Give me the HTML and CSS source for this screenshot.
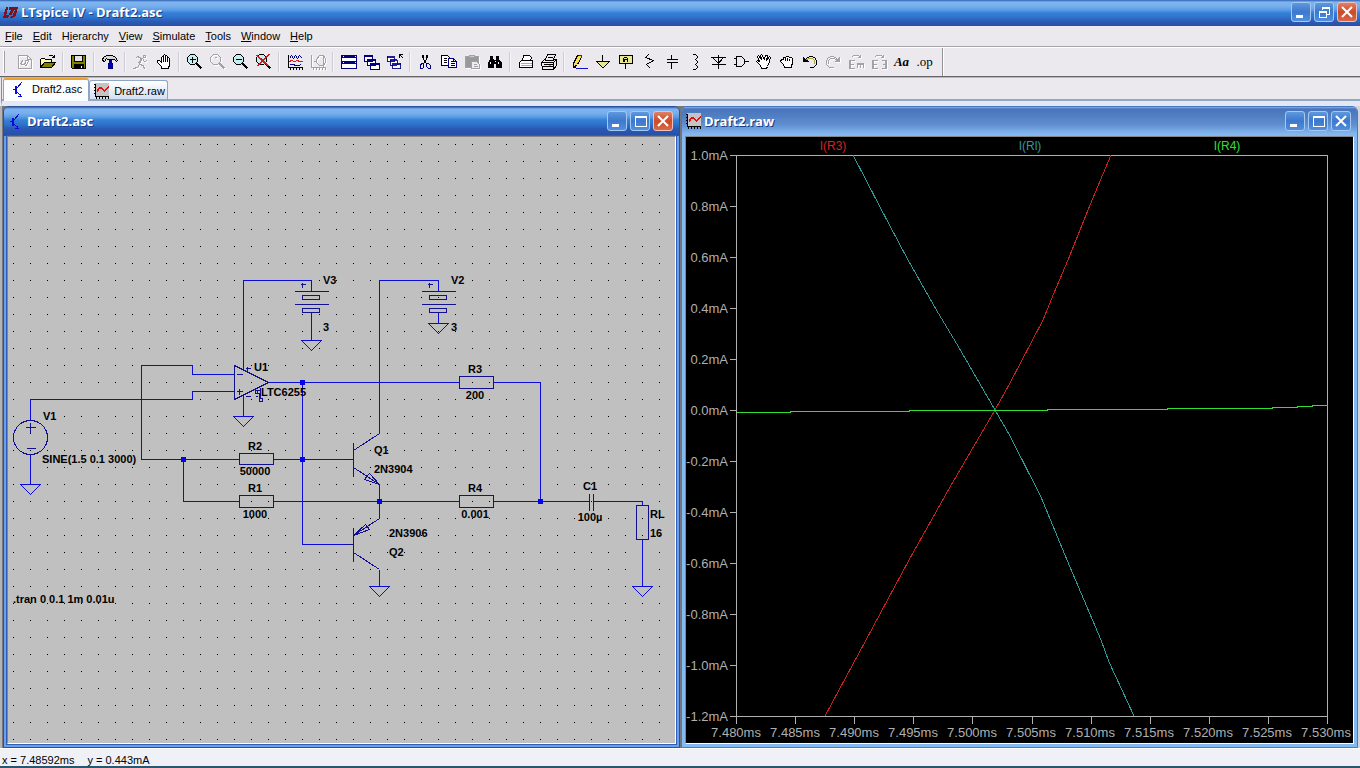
FILE: index.html
```html
<!DOCTYPE html>
<html lang="en">
<head>
    <meta charset="UTF-8">
    <meta name="viewport" content="width=device-width, initial-scale=1.0">
    <title>LTspice IV - Draft2.asc</title>
    <link rel="stylesheet" href="styles.css">
</head>
<body>

    <!-- shared symbols -->
    <svg class="defs" width="0" height="0">
        <symbol id="lens" viewBox="-.5 -.5 16 16">
            <path d="M9 9l5 5M10 9l5 5M9 10l5 5" stroke="#000" fill="none"/>
            <path d="M3 0h4l3 3v4l-3 3h-4l-3-3v-4z" fill="#c4eef0" stroke="#000"/>
        </symbol>
        <symbol id="transistor" viewBox="-.5 -.5 16 16">
            <path d="M1 8h4M4 4v8M5 4v8M5 6h1l4-5M5 10l5 5M9 12v3h-3M10 14v1" fill="none" stroke="#0a0ad8"/>
        </symbol>
        <symbol id="wave" viewBox="-.5 -.5 16 16">
            <path d="M2 0h13v12h-13z" fill="#c4c4c4" stroke="#c4c4c4"/>
            <path d="M2 0v13h14M0 1h2M0 4h2M0 7h2M0 10h2M3 13v2M6 13v2M9 13v2M12 13v2M15 13v2" fill="none" stroke="#000"/>
            <path d="M3 8l3-4h2l3 3 4-4M3 9l3-4h2l3 3 4-4" fill="none" stroke="#e01010"/>
        </symbol>
        <symbol id="cascade" viewBox="-.5 -.5 16 16">
            <path d="M0 1h8v6h-8zM3 5h8v6h-8zM6 9h9v6h-9z" fill="#fff" stroke="#000080"/>
            <path d="M0 2h8M3 6h8M6 10h9" stroke="#000080"/>
        </symbol>
    </svg>

    <header class="titlebar app-title">
        <svg class="logo" width="16" height="16" viewBox="-.5 -.5 16 16"><path d="M4 3h1L3 11h3l-1 2H1zM7 3h8l-2 7q-1 3-5 3l1-1q2 0 2-2l2-5h-2l-2 5H7l2-5H7z" fill="#801018" stroke="#801018"/></svg>
        <h1>LTspice IV - Draft2.asc</h1>
        <div class="controls">
            <button type="button" aria-label="Minimize"><svg width="18" height="18"><path d="M4 12h7v3h-7z" fill="#fff"/></svg></button>
            <button type="button" aria-label="Restore"><svg width="18" height="18"><path d="M7 7V4h7v7h-3M7 5h7" fill="none" stroke="#fff"/><path d="M4 8h7v6h-7zM4 9h7" fill="none" stroke="#fff"/></svg></button>
            <button type="button" class="close" aria-label="Close"><svg width="18" height="18"><path d="M4 4l10 10M14 4L4 14" stroke="#fff" stroke-width="2"/></svg></button>
        </div>
    </header>

    <nav class="menubar">
        <button type="button"><u>F</u>ile</button>
        <button type="button"><u>E</u>dit</button>
        <button type="button">H<u>i</u>erarchy</button>
        <button type="button"><u>V</u>iew</button>
        <button type="button"><u>S</u>imulate</button>
        <button type="button"><u>T</u>ools</button>
        <button type="button"><u>W</u>indow</button>
        <button type="button"><u>H</u>elp</button>
    </nav>

    <div class="toolbar-row">
        <div class="toolbar">
            <span class="grip"></span>
            <button type="button" disabled aria-label="New Schematic"><svg viewBox="-.5 -.5 16 16"><path d="M1 1h9l4 4v9h-13zM10 1v4h4M3 10h3M3 10l2-4M7 6h4l-2 5h-2M8 7l-1 4"/></svg></button>
            <button type="button" aria-label="Open"><svg viewBox="-.5 -.5 16 16"><path d="M0 13V5l1-1h3l1 1h6v3h-7z" fill="#ffff9c" stroke="#000"/><path d="M0 13l4-5h11l-4 5z" fill="#808000" stroke="#000"/><path d="M8 2l1-1h3l2 2M14 0v3h-3"/></svg></button>
            <i></i>
            <button type="button" aria-label="Save"><svg viewBox="-.5 -.5 16 16"><path d="M0 1h14v13h-13l-1-1z" fill="#808000" stroke="#000"/><path d="M3 1h8v6h-8z" fill="#e4e4e4" stroke="#000"/><path d="M3 10h9v4h-9z" fill="#000" stroke="#000"/><path d="M10 11v2" stroke="#fff"/></svg></button>
            <i></i>
            <button type="button" aria-label="Control Panel"><svg viewBox="-.5 -.5 16 16"><path d="M0 5l1-2 3-2h6l3 2 2 3-1 1-2-2H5L4 4 2 7 0 6z" fill="#d8d8d8" stroke="#000"/><path d="M7 6h2v3h1v5H6V9h1z" fill="#0000c0" stroke="#000080"/></svg></button>
            <i></i>
            <button type="button" disabled aria-label="Run"><svg viewBox="-.5 -.5 16 16"><path d="M10 1h2v2h-2zM2 4l2-2 4 2-3 5M9 4l2 3 3-1M8 5l-2 5 4 1 1 4M6 10l-2 3-4 1M8 4l-2 4" /></svg></button>
            <button type="button" aria-label="Halt"><svg viewBox="-.5 -.5 16 16"><path d="M5 14v-2l-4-4V6h2l2 2V3l1-1 1 1V1l1-1 1 1v1l1-1 1 1v2l1-1 1 1v7l-1 2v1z" fill="#fff"/><path d="M7 3v4M9 2v5M11 4v3"/></svg></button>
            <i></i>
            <button type="button" aria-label="Zoom area"><svg viewBox="-.5 -.5 16 16"><use href="#lens" x="-.5" y="-.5" width="16" height="16"/><path d="M2 5h6M5 2v6"/></svg></button>
            <button type="button" disabled aria-label="Pan"><svg viewBox="-.5 -.5 16 16"><path d="M3 0h4l3 3v4l-3 3h-4l-3-3v-4zM9 9l5 5M10 9l5 5M9 10l5 5M4 3h2"/></svg></button>
            <button type="button" aria-label="Zoom back"><svg viewBox="-.5 -.5 16 16"><use href="#lens" x="-.5" y="-.5" width="16" height="16"/><path d="M2 5h6"/></svg></button>
            <button type="button" aria-label="Zoom full extents"><svg viewBox="-.5 -.5 16 16"><use href="#lens" x="-.5" y="-.5" width="16" height="16"/><path d="M0 1l12 11M1 1l12 11M12 0L0 12M13 0L1 12" stroke="#d01818"/></svg></button>
            <i></i>
            <button type="button" aria-label="Autorange"><svg viewBox="-.5 -.5 16 16"><path d="M1 0v13h15M0 1h1M0 4h1M0 7h1M0 10h1M3 13v2M6 13v2M9 13v2M12 13v2M15 13v2"/><path d="M2 4l2-3 2 3 2-3 2 3 2-3 3 3M2 10h4l2 1h3l3-1" stroke="#000090"/><path d="M2 7l2-1 3 1 3-1 2 1h3" stroke="#e01818"/></svg></button>
            <button type="button" disabled aria-label="Pick visible traces"><svg viewBox="-.5 -.5 16 16"><path d="M1 0v13h15M0 1h1M0 4h1M0 7h1M0 10h1M3 13v2M6 13v2M9 13v2M12 13v2M15 13v2M3 7h3M6 5l3-4h4l2 3v4l-2 3H9L6 8zM13 0v12"/></svg></button>
            <i></i>
            <button type="button" aria-label="Tile"><svg viewBox="-.5 -.5 16 16"><path d="M0 1h15v13h-15z" fill="#fff" stroke="#000080"/><path d="M0 2h15M0 3h15M0 7h15M0 8h15M0 9h15" stroke="#000080"/><path d="M1 2h1M13 2h1M1 8h1M13 8h1" stroke="#fff"/></svg></button>
            <button type="button" aria-label="Cascade"><svg viewBox="-.5 -.5 16 16"><use href="#cascade" x="-.5" y="-.5" width="16" height="16"/></svg></button>
            <button type="button" aria-label="Close all"><svg viewBox="-.5 -.5 16 16"><use href="#cascade" x="-.5" y="-.5" width="14" height="16"/><path d="M12 0h3M12 0v3M12 0l4 4"/></svg></button>
            <i></i>
            <button type="button" aria-label="Cut"><svg viewBox="-.5 -.5 16 16"><path d="M4 0v3l4 6M9 0v3L5 9M5 0v3M8 0v3"/><path d="M3 9h2v4l-1 1H2v-3zM8 9h2l2 2v3h-2l-2-2z" stroke="#000080"/></svg></button>
            <button type="button" aria-label="Copy"><svg viewBox="-.5 -.5 16 16"><path d="M0 1h6l2 2v8h-8z" fill="#fff"/><path d="M2 4h3M2 6h3M2 8h3"/><path d="M7 4h5l3 3v6h-8zM12 4v3h3" fill="#fff" stroke="#000080"/><path d="M9 7h2M9 9h4M9 11h4" /></svg></button>
            <button type="button" disabled aria-label="Paste"><svg viewBox="-.5 -.5 16 16"><path d="M1 2h13v11h-13z" fill="#999"/><path d="M5 1h5v2h-5z" fill="#ccc"/><path d="M7 7h5l3 3v4h-8z" fill="#eee"/><path d="M9 10h3M9 12h4"/></svg></button>
            <button type="button" aria-label="Find"><svg viewBox="-.5 -.5 16 16"><path d="M3 2h2v3h1v8H1V8l2-3zM9 2h2v3l3 3v5H9V5zM6 6h3v3H6z" fill="#000"/><path d="M3 7v2M11 7v2M7 7h1" stroke="#fff"/></svg></button>
            <i></i>
            <button type="button" aria-label="Print setup"><svg viewBox="-.5 -.5 16 16"><path d="M4 6l1-5h6l2 2-1 3h2v7H1V8l2-2z" fill="#fff"/><path d="M2 9h11M2 11h11" stroke="#aaa"/><path d="M3 6h9M1 13h13"/></svg></button>
            <button type="button" aria-label="Print"><svg viewBox="-.5 -.5 16 16"><path d="M4 5l2-5h8l-2 5h3v6l-3 4H1L0 8l3-3z" fill="#ececec"/><path d="M6 3h5M3 6h9M0 8h12l3-3M1 12h11M12 8v6M2 10h9"/><path d="M7 11h2" stroke="#b0b000"/></svg></button>
            <i></i>
            <button type="button" aria-label="Wire"><svg viewBox="-.5 -.5 16 16"><path d="M5 1h4v2l-4 7-4 3v-4z" fill="#ffe040"/><path d="M6 1h3v2" stroke="#901010"/><path d="M1 10v3h2M2 11h1v1"/><path d="M3 14h12" stroke="#1010d0"/></svg></button>
            <button type="button" aria-label="Ground"><svg viewBox="-.5 -.5 16 16"><path d="M7 0v7"/><path d="M1 7h13l-6 6h-1z" fill="#e8e890"/></svg></button>
            <button type="button" aria-label="Label net"><svg viewBox="-.5 -.5 16 16"><path d="M1 1h13v8h-13zM7 9v5" fill="#e8e890"/><path d="M5 7V4l1-1h2l1 1v3M5 5h4M6 7V4M9 7V4"/></svg></button>
            <button type="button" aria-label="Resistor"><svg viewBox="-.5 -.5 16 16"><path d="M7 0l-3 3 8 3-7 4 4 4"/></svg></button>
            <button type="button" aria-label="Capacitor"><svg viewBox="-.5 -.5 16 16"><path d="M7 0v5M2 5h11M2 8h11M7 8v6"/></svg></button>
            <button type="button" aria-label="Inductor"><svg viewBox="-.5 -.5 16 16"><path d="M5 0h3l2 2v1l-2 2H7h1l2 2v1l-2 2H7h1l2 2v1l-2 2H5"/></svg></button>
            <button type="button" aria-label="Diode"><svg viewBox="-.5 -.5 16 16"><path d="M8 0v14M0 3h16M2 3h11l-5 6zM1 10h14"/></svg></button>
            <button type="button" aria-label="Component"><svg viewBox="-.5 -.5 16 16"><path d="M3 2h5l3 3v4l-3 3H3zM0 4h3M0 10h3M11 7h4"/></svg></button>
            <button type="button" aria-label="Move"><svg viewBox="-.5 -.5 16 16"><path d="M5 14l-1-3-4-4 1-1 2 1-2-5 1-1 3 4-1-4 1-1 3 5 1-4h2l-1 5 3-4 1 1-1 4-2 5-1 2z" fill="#fff"/></svg></button>
            <button type="button" aria-label="Drag"><svg viewBox="-.5 -.5 16 16"><path d="M5 13l-1-3-3-3 1-2h2V3h2l1-1h2l1 1h2l1 1v5l-1 2v2z" fill="#fff"/><path d="M6 3v3M8 3v3M10 4v2"/></svg></button>
            <button type="button" aria-label="Undo"><svg viewBox="-.5 -.5 16 16"><path d="M2 6l3-3 3-1h2l3 2 1 3v3l-3 3H7"/><path d="M3 6l3-2h4l2 2v3" stroke="#a8a840"/><path d="M1 2v5h5M2 3v3h3"/></svg></button>
            <button type="button" disabled aria-label="Redo"><svg viewBox="-.5 -.5 16 16"><path d="M13 6l-3-3-3-1H5L2 4 1 7v3l3 3h4M12 6L9 4H5L3 6v3M14 2v5H9M13 3v3h-3"/></svg></button>
            <button type="button" disabled aria-label="Rotate"><svg viewBox="-.5 -.5 16 16"><path d="M6 6H1v8h5M1 10h4M2 6v8M9 13V9h6v4M12 9v4M9 10h6M3 3l2-2h5l2 2M12 0v3H9"/></svg></button>
            <button type="button" disabled aria-label="Mirror"><svg viewBox="-.5 -.5 16 16"><path d="M6 6H1v8h5M1 10h4M2 6v8M10 6h5v8h-5M11 10h4M14 6v8M3 3l2-2h5l2 2M12 0v3H9"/></svg></button>
            <button type="button" class="text-tool aa">Aa</button>
            <button type="button" class="text-tool">.op</button>
        </div>
    </div>

    <div class="tabs">
        <button type="button" class="tab active"><svg width="16" height="16"><use href="#transistor"/></svg>Draft2.asc</button>
        <button type="button" class="tab"><svg width="16" height="16"><use href="#wave"/></svg>Draft2.raw</button>
    </div>

    <main class="mdi">
        <section class="window">
            <header class="titlebar">
                <svg width="16" height="16"><use href="#transistor"/></svg>
                <h2>Draft2.asc</h2>
                <div class="controls">
                    <button type="button" aria-label="Minimize"><svg width="18" height="18"><path d="M4 12h7v3h-7z" fill="#fff"/></svg></button>
                    <button type="button" aria-label="Maximize"><svg width="18" height="18"><path d="M4 4h11v10h-11zM4 5h11" fill="none" stroke="#fff"/></svg></button>
                    <button type="button" class="close" aria-label="Close"><svg width="18" height="18"><path d="M4 4l10 10M14 4L4 14" stroke="#fff" stroke-width="2"/></svg></button>
                </div>
            </header>
            <div class="canvas schematic">
                <svg width="667" height="606" viewBox="8 137 667 606">
                    <defs>
                        <pattern id="grid" x="13" y="144" width="17" height="17" patternUnits="userSpaceOnUse">
                            <rect width="1" height="1"/>
                        </pattern>
                        <path id="gnd" d="M-10 0h20l-10 10z"/>
                        <path id="cell" d="M-17 0h34M-9 4h17v4h-17zM-17 13h34M-9 17h17v4h-17zM-9 -9v5M-11 -7h5"/>
                    </defs>
                    <rect x="8" y="137" width="667" height="606" fill="url(#grid)"/>
                    <g class="wires" transform="translate(.5 .5)">
                        <path d="M243 369V280H311V291M311 312V340M243 395V416"/>
                        <path d="M234 374H192V365H141V459H239M234 391H192V399H30V420M30 454V484"/>
                        <path d="M183 459V501H239M268 382H459M302 382V544H345M273 459H345M273 501H459"/>
                        <path d="M379 433V280H438V291M438 312V323M493 382H540V501M493 501H589M593 501H642V505"/>
                        <path d="M379 484V518M379 569V586M642 539V586"/>
                        <use href="#gnd" x="311" y="340"/>
                        <use href="#gnd" x="438" y="323"/>
                        <use href="#gnd" x="243" y="416"/>
                        <use href="#gnd" x="30" y="484"/>
                        <use href="#gnd" x="379" y="586"/>
                        <use href="#gnd" x="642" y="586"/>
                    </g>
                    <g class="parts" transform="translate(.5 .5)">
                        <use href="#cell" x="311" y="291"/>
                        <use href="#cell" x="438" y="291"/>
                        <path d="M234 365V399L268 382ZM236 374h6M236 391h6M239 388v6M245 368h5M247 366v5M245 396h5"/>
                        <path d="M260 387V398M259 398h3v3h-3zM259 390h-4v3h4v4M257 390v3M255 396h2"/>
                        <circle cx="30" cy="437" r="17"/>
                        <path d="M30 422v10M25 427h10M26 448h9"/>
                        <path d="M239 453h34v11h-34zM239 495h34v12h-34zM459 376h34v12h-34zM459 495h34v12h-34zM636 505h12v34h-12z"/>
                        <path d="M345 459H353M353 442V476M353 450L379 433M353 467L379 484L369 473L364 479L379 484"/>
                        <path d="M345 544H353M353 527V561M379 518L353 535L365 524L369 529L353 535M353 552L379 569"/>
                        <path d="M575 501h14M589 493v17M593 493v17M593 501h14"/>
                    </g>
                    <path class="nodes" d="M181 457h5v5h-5zM300 380h5v5h-5zM300 457h5v5h-5zM377 499h5v5h-5zM538 499h5v5h-5z"/>
                    <g class="labels">
                        <text x="323" y="284">V3</text>
                        <text x="323" y="331">3</text>
                        <text x="451" y="284">V2</text>
                        <text x="451" y="331">3</text>
                        <text x="254" y="371">U1</text>
                        <text x="261" y="396">LTC6255</text>
                        <text x="43" y="420">V1</text>
                        <text x="42" y="463">SINE(1.5 0.1 3000)</text>
                        <text x="374" y="454">Q1</text>
                        <text x="374" y="473">2N3904</text>
                        <text x="389" y="537">2N3906</text>
                        <text x="389" y="556">Q2</text>
                        <text x="650" y="518">RL</text>
                        <text x="650" y="537">16</text>
                        <text x="13" y="603">.tran 0 0.1 1m 0.01u</text>
                    </g>
                    <g class="labels centered">
                        <text x="255" y="450">R2</text>
                        <text x="255" y="475">50000</text>
                        <text x="255" y="492">R1</text>
                        <text x="255" y="518">1000</text>
                        <text x="475" y="373">R3</text>
                        <text x="475" y="399">200</text>
                        <text x="475" y="492">R4</text>
                        <text x="475" y="518">0.001</text>
                        <text x="590" y="490">C1</text>
                        <text x="590" y="521">100µ</text>
                    </g>
                </svg>
            </div>
        </section>

        <section class="window inactive">
            <header class="titlebar">
                <svg width="16" height="16"><use href="#wave"/></svg>
                <h2>Draft2.raw</h2>
                <div class="controls">
                    <button type="button" aria-label="Minimize"><svg width="18" height="18"><path d="M4 12h7v3h-7z" fill="#fff"/></svg></button>
                    <button type="button" aria-label="Maximize"><svg width="18" height="18"><path d="M4 4h11v10h-11zM4 5h11" fill="none" stroke="#fff"/></svg></button>
                    <button type="button" aria-label="Close"><svg width="18" height="18"><path d="M4 4l10 10M14 4L4 14" stroke="#fff" stroke-width="2"/></svg></button>
                </div>
            </header>
            <div class="canvas plot">
                <svg width="667" height="606" viewBox="686 137 667 606">
                    <g class="axes" transform="translate(.5 .5)">
                        <path d="M736 155H1327V716H736Z"/>
                        <path d="M729 155h7M729 206h7M729 257h7M729 308h7M729 359h7M729 410h7M729 461h7M729 512h7M729 563h7M729 614h7M729 665h7M729 716h7"/>
                        <path d="M736 716v7M795 716v7M854 716v7M913 716v7M972 716v7M1032 716v7M1091 716v7M1150 716v7M1209 716v7M1268 716v7M1327 716v7"/>
                    </g>
                    <g class="traces">
                        <polyline stroke="#c82020" points="825,716 866,640 909,560 950,487 995,410 1010,383 1043,320 1054,293 1068,260 1090,205 1111,155"/>
                        <polyline stroke="#2f9a9a" points="853,155 880,207 908,260 937,311 958,346 995,410 1010,436 1041,497 1067,560 1101,640 1109,662 1134,716"/>
                        <polyline stroke="#30e030" transform="translate(.5 .5)" points="736,412 790,412 790,411 909,411 909,410 1047,410 1047,409 1167,409 1167,408 1272,408 1272,407 1297,407 1297,406 1312,406 1312,405 1327,405"/>
                    </g>
                    <g class="y-labels">
                        <text x="728" y="160">1.0mA</text>
                        <text x="728" y="211">0.8mA</text>
                        <text x="728" y="262">0.6mA</text>
                        <text x="728" y="313">0.4mA</text>
                        <text x="728" y="364">0.2mA</text>
                        <text x="728" y="415">0.0mA</text>
                        <text x="728" y="466">-0.2mA</text>
                        <text x="728" y="517">-0.4mA</text>
                        <text x="728" y="568">-0.6mA</text>
                        <text x="728" y="619">-0.8mA</text>
                        <text x="728" y="670">-1.0mA</text>
                        <text x="728" y="721">-1.2mA</text>
                    </g>
                    <g class="x-labels">
                        <text x="736" y="737">7.480ms</text>
                        <text x="795" y="737">7.485ms</text>
                        <text x="854" y="737">7.490ms</text>
                        <text x="913" y="737">7.495ms</text>
                        <text x="972" y="737">7.500ms</text>
                        <text x="1031" y="737">7.505ms</text>
                        <text x="1090" y="737">7.510ms</text>
                        <text x="1149" y="737">7.515ms</text>
                        <text x="1208" y="737">7.520ms</text>
                        <text x="1267" y="737">7.525ms</text>
                        <text x="1326" y="737">7.530ms</text>
                    </g>
                    <g class="legend">
                        <text x="833" y="150" fill="#d82020">I(R3)</text>
                        <text x="1030" y="150" fill="#2f9a9a">I(Rl)</text>
                        <text x="1227" y="150" fill="#30e030">I(R4)</text>
                    </g>
                </svg>
            </div>
        </section>
    </main>

    <footer class="status">
        <span>x = 7.48592ms</span>
        <span>y = 0.443mA</span>
    </footer>

</body>
</html>
```
FILE: styles.css
```css
* {
    box-sizing: border-box;
}
body {
    margin: 0;
    height: 100vh;
    display: flex;
    flex-direction: column;
    overflow: hidden;
    background-color: #ebe9ee;
    color: #000;
    font: 11px/14px "Liberation Sans", Arial, sans-serif;
}
button {
    margin: 0;
    padding: 0;
    border: 0;
    background: none;
    color: inherit;
    font: inherit;
}
svg {
    display: block;
    flex: none;
    shape-rendering: crispEdges;
}
.defs {
    position: absolute;
}

/* title bars */
.titlebar {
    display: flex;
    align-items: center;
    flex: none;
    height: 29px;
    padding: 0 3px 1px 4px;
    gap: 3px;
    background: linear-gradient(#2f62b8 0, #7fb4ee 2px, #78b0ec 6px, #5c9ce4 10px, #3480d8 13px, #2f74cc 17px, #2a58b4 22px, #2750a4 100%);
}
.titlebar h1,
.titlebar h2 {
    flex: 1;
    margin: 0;
    color: #fff;
    font: bold 13px/16px "Open Sans", "Noto Sans", sans-serif;
    text-shadow: 1px 1px #1b3c86;
}
.app-title {
    height: 26px;
    padding: 0 3px 2px 2px;
}
.controls {
    display: flex;
    gap: 3px;
}
.controls button {
    width: 20px;
    height: 20px;
    border: 1px solid #a5c8f2;
    border-radius: 3px;
    background: linear-gradient(#5d98de, #3d78cc 50%, #4f90de);
}
.controls .close {
    border-color: #f0c0b8;
    background: linear-gradient(#e08068, #cc4a28 50%, #d86848);
}
.controls button[aria-label="Close"] path {
    shape-rendering: auto;
}

/* menu */
.menubar {
    display: flex;
    flex: none;
    height: 22px;
    border-bottom: 1px solid #fff;
    box-shadow: inset 0 -1px #a5a5a8;
}
.menubar button {
    padding: 0 5px 1px;
}
.menubar u {
    text-underline-offset: 1px;
}

/* toolbar */
.toolbar-row {
    display: flex;
    flex: none;
    height: 30px;
    border-bottom: 2px groove #b8b8bc;
}
.toolbar {
    display: flex;
    align-items: center;
    padding-right: 6px;
    border-right: 1px solid #909094;
    box-shadow: 1px 0 #fff;
}
.grip {
    width: 2px;
    height: 22px;
    margin: 0 8px 0 3px;
    border-left: 1px solid #fff;
    border-right: 1px solid #a0a0a4;
}
.toolbar button {
    width: 23px;
    height: 22px;
    padding: 3px 3px 3px 4px;
}
.toolbar button svg {
    width: 16px;
    height: 16px;
    fill: none;
    stroke: #000;
}
.toolbar button:disabled svg {
    stroke: #a2a2a6;
    filter: drop-shadow(1px 1px #fff);
}
.toolbar i {
    width: 2px;
    height: 20px;
    margin: 0 3px;
    border-left: 1px solid #cdccd4;
    border-right: 1px solid #f6f5f8;
}
.toolbar .text-tool {
    padding: 0;
    font: 13px/16px "Liberation Serif", serif;
}
.toolbar .aa {
    font-weight: bold;
    font-style: italic;
}

/* document tabs */
.tabs {
    display: flex;
    align-items: flex-end;
    flex: none;
    height: 28px;
    margin-left: 1px;
    padding-left: 1px;
    border-left: 1px solid #8c8c90;
    border-bottom: 5px solid #e4e8f6;
    box-shadow: inset 0 -2px #93a7bf;
}
.tab {
    display: flex;
    align-items: center;
    height: 19px;
    padding: 1px 2px 0 3px;
    gap: 5px;
    border: 1px solid #8fa5c8;
    border-bottom: 0;
    border-radius: 3px 3px 0 0;
    background: linear-gradient(#fff, #d3dff4);
    margin-bottom: 2px;
}
.tab.active {
    height: 23px;
    padding: 0 6px 3px 7px;
    margin-bottom: 0;
    border-top: 2px solid #f0a028;
    background: #fcfdff;
}

/* child windows */
.mdi {
    display: flex;
    flex: 1;
    min-height: 0;
    gap: 1px;
    padding: 0 2px 0 3px;
    background: linear-gradient(90deg, #b4b4b6, #b4b4b6 2px, #77777a 2px, #77777a 50%, #d4d4da 100%);
}
.window {
    display: flex;
    flex-direction: column;
    flex: 1 1 0;
    min-width: 0;
    border: 1px solid #2a509e;
    border-radius: 6px 6px 0 0;
    background: #6b9fec;
    overflow: hidden;
}
.window .titlebar {
    padding-right: 6px;
}
.canvas {
    flex: 1;
    min-height: 0;
    margin: 0 3px 3px;
    border: 1px solid #fff;
    border-top-color: #85858a;
    border-left-color: #85858a;
    box-shadow: 0 0 0 1px #2f5fb8;
    overflow: hidden;
}
.inactive {
    border-color: #4a78c4;
    background: #84baf4;
}
.inactive .titlebar {
    padding-left: 3px;
    gap: 3px;
    background: linear-gradient(#84aee8 0, #4a74bc 2px, #5280c4 10px, #6090d0 18px, #80b4ec 26px, #84baf4 100%);
}
.inactive .canvas {
    box-shadow: none;
}

/* schematic */
.schematic {
    background-color: #c0c0c0;
}
.wires,
.parts {
    fill: none;
    stroke: #0c0cd8;
}
.parts {
    stroke: #101090;
}
.nodes {
    fill: #0404e8;
}
.labels {
    font: bold 11px "Liberation Sans", Arial, sans-serif;
}
.centered {
    text-anchor: middle;
}

/* waveform plot */
.plot {
    background-color: #000;
    font-size: 13px;
    fill: #b0b0b0;
}
.axes {
    fill: none;
    stroke: #b0b0b0;
}
.traces {
    fill: none;
}
.y-labels {
    text-anchor: end;
}
.x-labels {
    text-anchor: middle;
}
.legend {
    font-size: 12px;
    text-anchor: middle;
}

/* status bar */
.status {
    display: flex;
    flex: none;
    gap: 13px;
    height: 20px;
    padding: 4px 2px 0;
    border-top: 1px solid #fff;
    border-bottom: 2px solid #2c566e;
    background-color: #eff1f6;
}
```
